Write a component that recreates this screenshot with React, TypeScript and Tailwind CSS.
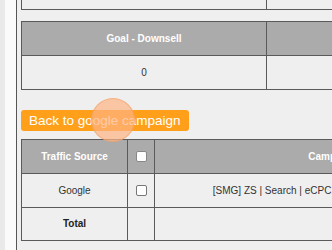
export default function App() {
  const cell = "border border-[#5a5a5a] text-center align-middle";
  const head = cell + " bg-[#ababab] text-white font-bold";

  return (
    <div
      className="flex w-[332px] h-[250px] overflow-hidden bg-[#efefef] text-[10px] text-[#333]"
      style={{ fontFamily: '"Liberation Sans", Arial, sans-serif' }}
    >
      <div className="w-[5px] shrink-0 bg-[#e9e9e9]" />
      <div className="w-[11px] shrink-0 bg-[#fafafa]" />
      <div className="flex-1 min-w-0 border-l border-[#555] pl-[4px]">
        {/* tail of the table above */}
        <table className="border-collapse table-fixed w-[700px]">
          <tbody>
            <tr>
              <td className="w-[245px] h-[9px] border-x border-b border-[#5a5a5a]" />
              <td className="h-[9px] border-x border-b border-[#5a5a5a]" />
            </tr>
          </tbody>
        </table>

        {/* goal table */}
        <table className="mt-[11px] border-collapse table-fixed w-[700px]">
          <tbody>
            <tr className="h-[34px]">
              <th className={head + " w-[245px]"}>Goal - Downsell</th>
              <th className={head} />
            </tr>
            <tr className="h-[34px]">
              <td className={cell}>0</td>
              <td className={cell} />
            </tr>
          </tbody>
        </table>

        {/* back button */}
        <div className="relative mt-[20px] w-fit">
          <button className="h-[21px] px-2 rounded-[3px] bg-[#ff9f1a] text-white text-[13.5px] leading-[21px] whitespace-nowrap">
            Back to google campaign
          </button>
          <div className="absolute left-[70px] top-[-12px] w-[44px] h-[44px] rounded-full bg-[rgba(255,180,130,0.7)] border border-[rgba(240,150,90,0.5)] pointer-events-none" />
        </div>

        {/* campaign table */}
        <table className="mt-[8px] border-collapse table-fixed w-[700px]">
          <tbody>
            <tr className="h-[34px]">
              <th className={head + " w-[106px]"}>Traffic Source</th>
              <th className={head + " w-[27px]"}>
                <span className="inline-block align-middle w-[11px] h-[11px] bg-white border border-[#888] rounded-[2px]" />
              </th>
              <th className={head + " w-[356px]"}>Campaign</th>
              <th className={head} />
            </tr>
            <tr className="h-[34px]">
              <td className={cell}>Google</td>
              <td className={cell}>
                <span className="inline-block align-middle w-[11px] h-[11px] bg-white border border-[#777] rounded-[2px]" />
              </td>
              <td className={cell + " whitespace-nowrap"}>
                [SMG] ZS | Search | eCPC | Brand - Exact Match | US
              </td>
              <td className={cell} />
            </tr>
            <tr className="h-[33px]">
              <td className={cell + " font-bold text-[#222]"}>Total</td>
              <td className={cell} />
              <td className={cell} />
              <td className={cell} />
            </tr>
          </tbody>
        </table>
      </div>
    </div>
  );
}
